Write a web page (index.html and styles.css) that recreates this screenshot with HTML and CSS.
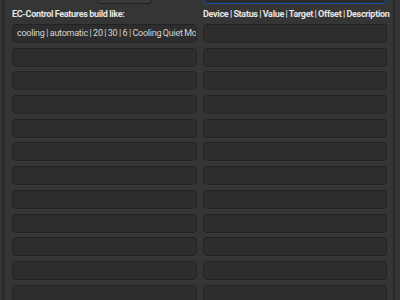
FILE: index.html
```html
<!DOCTYPE html>
<html lang="en">
<head>
    <meta charset="UTF-8">
    <title>EC-Control</title>
    <link rel="stylesheet" href="styles.css">
</head>
<body>
    <div class="window">
        <div class="columns">
            <div class="column">
                <div class="top-strip">
                    <div class="stub-button"></div>
                </div>
                <div class="heading">EC-Control Features build like:</div>
                <div class="list">
                    <div class="entry">cooling | automatic | 20 | 30 | 6 | Cooling Quiet Mode</div>
                    <div class="entry"></div>
                    <div class="entry"></div>
                    <div class="entry"></div>
                    <div class="entry"></div>
                    <div class="entry"></div>
                    <div class="entry"></div>
                    <div class="entry"></div>
                    <div class="entry"></div>
                    <div class="entry"></div>
                    <div class="entry"></div>
                    <div class="entry"></div>
                </div>
            </div>
            <div class="column">
                <div class="top-strip">
                    <div class="stub-entry"></div>
                </div>
                <div class="heading">Device | Status | Value | Target | Offset | Description</div>
                <div class="list">
                    <div class="entry"></div>
                    <div class="entry"></div>
                    <div class="entry"></div>
                    <div class="entry"></div>
                    <div class="entry"></div>
                    <div class="entry"></div>
                    <div class="entry"></div>
                    <div class="entry"></div>
                    <div class="entry"></div>
                    <div class="entry"></div>
                    <div class="entry"></div>
                    <div class="entry"></div>
                </div>
            </div>
        </div>
    </div>
</body>
</html>
```

FILE: styles.css
```css
body {
    margin: 0;
    background-color: #353535;
    font-family: Roboto, "Noto Sans", sans-serif;
    color: #eeeeec;
    overflow: hidden;
}

.window {
    height: 300px;
    margin-left: 2px;
    margin-right: 5px;
    border-left: 1px solid #232323;
    border-right: 1px solid #262626;
    box-shadow: inset 3px 0 0 #2f2f2f, inset -2px 0 0 #2e2e2e;
    overflow: hidden;
}

.columns {
    display: grid;
    grid-template-columns: 185px 184px;
    gap: 6px;
    padding-left: 9px;
}

.column {
    display: flex;
    flex-direction: column;
    min-width: 0;
}

.top-strip {
    height: 4px;
    margin-top: -10px;
    padding-top: 10px;
    overflow: hidden;
}

.stub-button {
    width: 53px;
    height: 12px;
    margin-left: 85px;
    margin-top: -10px;
    background-color: #3a3a3a;
    border: 1px solid #1f1f1f;
    border-radius: 4px;
}

.stub-entry {
    height: 12px;
    margin-top: -10px;
    background-color: #2a2a2a;
    border: 1px solid #15539e;
    border-radius: 4px;
}

.heading {
    font-size: 9px;
    font-weight: bold;
    letter-spacing: -0.3px;
    word-spacing: -0.4px;
    line-height: 12px;
    height: 20px;
    padding-top: 4px;
    box-sizing: border-box;
    white-space: nowrap;
    color: #e6e6e6;
}

.list {
    display: flex;
    flex-direction: column;
    gap: 4.7px;
}

.entry {
    height: 19px;
    box-sizing: border-box;
    background-color: #2d2d2d;
    border: 1px solid #232323;
    border-radius: 4px;
    box-shadow: 0 1px 0 #3b3b3b;
    font-size: 9px;
    letter-spacing: -0.25px;
    word-spacing: -0.4px;
    line-height: 17px;
    padding: 0 4px;
    white-space: nowrap;
    overflow: hidden;
    color: #d6d6d6;
}
```
